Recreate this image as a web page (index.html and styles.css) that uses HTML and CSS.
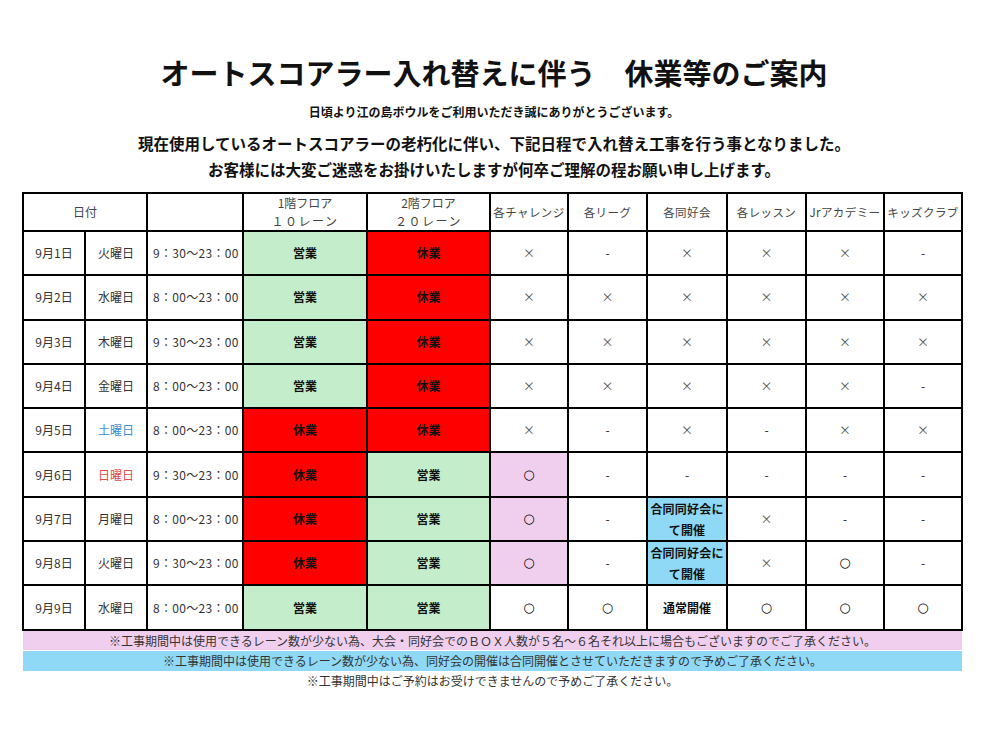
FILE: index.html
```html
<!DOCTYPE html>
<html lang="ja">
<head>
<meta charset="utf-8">
<title>休業等のご案内</title>
<link rel="stylesheet" href="styles.css">
</head>
<body>
<div class="page">
  <h1 class="title">オートスコアラー入れ替えに伴う　休業等のご案内</h1>
  <p class="greet">日頃より江の島ボウルをご利用いただき誠にありがとうございます。</p>
  <p class="lead">現在使用しているオートスコアラーの老朽化に伴い、下記日程で入れ替え工事を行う事となりました。</p>
  <p class="lead">お客様には大変ご迷惑をお掛けいたしますが何卒ご理解の程お願い申し上げます。</p>

  <table class="sched">
    <colgroup>
      <col class="c-date"><col class="c-day"><col class="c-time"><col class="c-floor1"><col class="c-floor2">
      <col class="c-ch"><col class="c-lg"><col class="c-cl"><col class="c-ls"><col class="c-jr"><col class="c-kd">
    </colgroup>
    <thead>
      <tr class="hrow">
        <th colspan="2">日付</th>
        <th></th>
        <th class="two">1階フロア<br><span class="sp">１０レーン</span></th>
        <th class="two">2階フロア<br><span class="sp">２０レーン</span></th>
        <th class="kana">各チャレンジ</th>
        <th class="kana">各リーグ</th>
        <th class="kana">各同好会</th>
        <th class="kana">各レッスン</th>
        <th class="kana">Jrアカデミー</th>
        <th class="kana">キッズクラブ</th>
      </tr>
    </thead>
    <tbody>
      <tr>
        <td>9月1日</td><td>火曜日</td><td class="time">9：30～23：00</td>
        <td class="open">営業</td><td class="closed">休業</td>
        <td class="x">×</td><td class="dash">-</td><td class="x">×</td><td class="x">×</td><td class="x">×</td><td class="dash">-</td>
      </tr>
      <tr>
        <td>9月2日</td><td>水曜日</td><td class="time">8：00～23：00</td>
        <td class="open">営業</td><td class="closed">休業</td>
        <td class="x">×</td><td class="x">×</td><td class="x">×</td><td class="x">×</td><td class="x">×</td><td class="x">×</td>
      </tr>
      <tr>
        <td>9月3日</td><td>木曜日</td><td class="time">9：30～23：00</td>
        <td class="open">営業</td><td class="closed">休業</td>
        <td class="x">×</td><td class="x">×</td><td class="x">×</td><td class="x">×</td><td class="x">×</td><td class="x">×</td>
      </tr>
      <tr>
        <td>9月4日</td><td>金曜日</td><td class="time">8：00～23：00</td>
        <td class="open">営業</td><td class="closed">休業</td>
        <td class="x">×</td><td class="x">×</td><td class="x">×</td><td class="x">×</td><td class="x">×</td><td class="dash">-</td>
      </tr>
      <tr>
        <td>9月5日</td><td class="sat">土曜日</td><td class="time">8：00～23：00</td>
        <td class="closed">休業</td><td class="closed">休業</td>
        <td class="x">×</td><td class="dash">-</td><td class="x">×</td><td class="dash">-</td><td class="x">×</td><td class="x">×</td>
      </tr>
      <tr>
        <td>9月6日</td><td class="sun">日曜日</td><td class="time">9：30～23：00</td>
        <td class="closed">休業</td><td class="open">営業</td>
        <td class="ok pink">○</td><td class="dash">-</td><td class="dash">-</td><td class="dash">-</td><td class="dash">-</td><td class="dash">-</td>
      </tr>
      <tr>
        <td>9月7日</td><td>月曜日</td><td class="time">8：00～23：00</td>
        <td class="closed">休業</td><td class="open">営業</td>
        <td class="ok pink">○</td><td class="dash">-</td><td class="joint">合同同好会にて開催</td><td class="x">×</td><td class="dash">-</td><td class="dash">-</td>
      </tr>
      <tr>
        <td>9月8日</td><td>火曜日</td><td class="time">9：30～23：00</td>
        <td class="closed">休業</td><td class="open">営業</td>
        <td class="ok pink">○</td><td class="dash">-</td><td class="joint">合同同好会にて開催</td><td class="x">×</td><td class="ok">○</td><td class="dash">-</td>
      </tr>
      <tr>
        <td>9月9日</td><td>水曜日</td><td class="time">8：00～23：00</td>
        <td class="open">営業</td><td class="open">営業</td>
        <td class="ok">○</td><td class="ok">○</td><td class="bold">通常開催</td><td class="ok">○</td><td class="ok">○</td><td class="ok">○</td>
      </tr>
    </tbody>
  </table>

  <div class="notes">
    <p class="note note-pink">※工事期間中は使用できるレーン数が少ない為、大会・同好会でのＢＯＸ人数が５名～６名それ以上に場合もございますのでご了承ください。</p>
    <p class="note note-blue">※工事期間中は使用できるレーン数が少ない為、同好会の開催は合同開催とさせていただきますので予めご了承ください。</p>
    <p class="note">※工事期間中はご予約はお受けできませんので予めご了承ください。</p>
  </div>
</div>
</body>
</html>
```

FILE: styles.css
```css
html, body {
  margin: 0;
  padding: 0;
  background: #ffffff;
}

body {
  font-family: "Noto Sans CJK JP", "Noto Sans", sans-serif;
  color: #333333;
}

.page {
  width: 988px;
  padding-top: 52px;
  box-sizing: border-box;
}

.title {
  margin: 0;
  font-size: 29px;
  line-height: 40px;
  font-weight: 700;
  color: #111111;
  text-align: center;
}

.greet {
  margin: 10px 0 0;
  font-size: 12px;
  line-height: 20px;
  font-weight: 700;
  color: #111111;
  text-align: center;
}

.lead {
  margin: 0;
  font-size: 15.5px;
  line-height: 26px;
  font-weight: 700;
  color: #111111;
  text-align: center;
}

.greet + .lead {
  margin-top: 8px;
}

.sched {
  margin: 10px 0 0 22px;
  width: 941px;
  table-layout: fixed;
  border-collapse: collapse;
  font-size: 12px;
}

.c-date { width: 62px; }
.c-day { width: 62px; }
.c-time { width: 96px; }
.c-floor1 { width: 124px; }
.c-floor2 { width: 123px; }
.c-ch { width: 78px; }
.c-lg { width: 79px; }
.c-cl { width: 80px; }
.c-ls { width: 79px; }
.c-jr { width: 78px; }
.c-kd { width: 78px; }

.sched th,
.sched td {
  border: 2px solid #000000;
  padding: 0;
  text-align: center;
  vertical-align: middle;
  overflow: hidden;
  white-space: nowrap;
  line-height: 16px;
}

.hrow {
  height: 37px;
}

.sched th {
  font-weight: 400;
  color: #444444;
  font-size: 12px;
  line-height: 18px;
}

.sched th.kana {
  font-size: 11.5px;
  letter-spacing: 0.4px;
}

.sp {
  letter-spacing: 1.5px;
}

.sched tbody tr {
  height: 44.3px;
}

.sched td {
  color: #333333;
}

.sched .time {
  letter-spacing: 0.3px;
  text-align: left;
  padding-left: 5px;
}

.sched .sat { color: #3b8ed0; }
.sched .sun { color: #e24a4a; }

.sched .open {
  background: #c4eecb;
  font-weight: 700;
  color: #111111;
}

.sched .closed {
  background: #ff0000;
  font-weight: 700;
  color: #111111;
}

.sched .x {
  color: #555555;
  font-size: 12px;
}

.sched .dash {
  color: #222222;
}

.sched .ok {
  color: #000000;
  font-family: "DejaVu Sans", sans-serif;
  font-weight: 700;
  font-size: 13px;
}

.sched .pink {
  background: #f0cfee;
}

.sched .joint {
  background: #8fd9f6;
  font-weight: 700;
  color: #111111;
  white-space: normal;
  line-height: 21px;
  letter-spacing: 0.2px;
}

.sched .bold {
  font-weight: 700;
  color: #111111;
}

.notes {
  margin: 0 0 0 23px;
  width: 939px;
}

.note {
  margin: 0;
  font-size: 12px;
  line-height: 20px;
  text-align: center;
  color: #333333;
}

.note-pink {
  background: #f0cfee;
  height: 19px;
  line-height: 19px;
}

.note-blue {
  background: #8fd9f6;
  margin-top: 1px;
  height: 20px;
  line-height: 20px;
}
```
